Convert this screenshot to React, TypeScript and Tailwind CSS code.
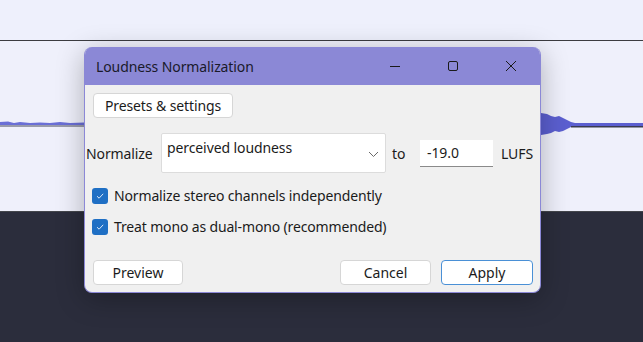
import React from "react";

const font = { fontFamily: '"Noto Sans", "Segoe UI", sans-serif' };

const Checkbox: React.FC<{ label: string }> = ({ label }) => (
  <label className="flex items-center gap-[6px] h-[16px]">
    <span className="w-[16px] h-[16px] rounded-[3px] bg-[#1f6fc4] flex items-center justify-center">
      <svg width="10" height="10" viewBox="0 0 10 10">
        <path d="M2 5.2 L4.1 7.2 L8.2 2.8" fill="none" stroke="#dbe8f7" strokeWidth="1" />
      </svg>
    </span>
    <span className="text-[14px] text-[#1b1b1b] leading-none tracking-[-0.15px]">{label}</span>
  </label>
);

const Btn: React.FC<{ label: string; w: string; primary?: boolean }> = ({ label, w, primary }) => (
  <button
    className={`${w} h-[25px] bg-white rounded-[4px] text-[14px] text-[#1b1b1b] leading-none pt-[1px] ${
      primary ? "border border-[#4a90d6]" : "border border-[#d6d6d6]"
    }`}
  >
    {label}
  </button>
);

export default function App() {
  return (
    <div className="relative w-[643px] h-[342px] overflow-hidden bg-[#eef0fc]" style={font}>
      {/* track area */}
      <div className="flex flex-col h-full">
        <div className="h-[40px] bg-[#eef0fc]" />
        <div className="h-[1px] bg-[#3c3c40]" />
        <div className="relative h-[170px] bg-[#eff0fb]">
          <svg className="absolute left-0 top-[79px]" width="84" height="8" viewBox="0 0 84 8">
            <path
              d="M0 2 L8 1.5 L14 3 L20 2 L30 3 L40 2.5 L50 3 L60 2 L70 3 L84 2.5 L84 5 L0 5 Z"
              fill="#6a6fd6"
            />
            <rect x="0" y="5.5" width="84" height="1" fill="#44465a" />
          </svg>
          <svg className="absolute left-[541px] top-[68px]" width="102" height="30" viewBox="0 0 102 30">
            <path
              d="M0 4 L6 5 L10 7 L14 8 L18 7 L22 9 L26 11 L30 13 L34 14 L102 14 L102 17 L34 17 L30 18 L26 20 L22 22 L18 23 L14 22 L10 24 L6 25 L0 26 Z"
              fill="#5b5fd0"
            />
            <rect x="30" y="17" width="72" height="1.5" fill="#3a3c50" />
          </svg>
        </div>
        <div className="h-[1px] bg-[#44464c]" />
        <div className="flex-1 bg-[#2b2d3c]" />
      </div>

      {/* dialog */}
      <div className="absolute left-[84px] top-[47px] w-[457px] h-[246px] rounded-[8px] overflow-hidden bg-[#f0f0f0] border border-[#8b88d6] border-t-0 shadow-[0_6px_28px_rgba(0,0,0,0.28)] flex flex-col">
        <div className="h-[38px] bg-[#8b88d6] flex items-center pl-[11px] shrink-0">
          <span className="text-[14px] text-[#1a1a2a] flex-1 tracking-[-0.1px]">Loudness Normalization</span>
          <div className="flex items-center">
            <span className="w-[58px] flex justify-center">
              <svg width="12" height="12" viewBox="0 0 12 12">
                <path d="M1 6.5 H11" stroke="#1a1a1a" strokeWidth="1" />
              </svg>
            </span>
            <span className="w-[58px] flex justify-center">
              <svg width="12" height="12" viewBox="0 0 12 12">
                <rect x="1.5" y="1.5" width="9" height="9" rx="1.5" fill="none" stroke="#1a1a1a" strokeWidth="1" />
              </svg>
            </span>
            <span className="w-[58px] flex justify-center">
              <svg width="12" height="12" viewBox="0 0 12 12">
                <path d="M1 1 L11 11 M11 1 L1 11" stroke="#1a1a1a" strokeWidth="1" />
              </svg>
            </span>
          </div>
        </div>

        <div className="flex flex-col pl-[8px] pr-[7px] pt-[8px]">
          <div className="flex">
            <button className="w-[140px] h-[25px] bg-white border border-[#d6d6d6] rounded-[4px] text-[14px] text-[#1b1b1b] leading-none tracking-[-0.1px] pt-[1px]">
              Presets &amp; settings
            </button>
          </div>

          <div className="flex items-center mt-[15px] -ml-[8px] tracking-[-0.1px]">
            <span className="text-[14px] text-[#1b1b1b] w-[76px] pl-[1px]">Normalize</span>
            <div className="w-[225px] h-[40px] bg-white border border-[#dcdcdc] rounded-[2px] flex items-start justify-between pl-[5px] pr-[6px] pt-[3px]">
              <span className="text-[14px] text-[#1b1b1b]">perceived loudness</span>
              <svg className="mt-[14px]" width="11" height="7" viewBox="0 0 11 7">
                <path d="M1 1 L5.5 5.5 L10 1" fill="none" stroke="#6a6a6a" strokeWidth="1" />
              </svg>
            </div>
            <span className="text-[14px] text-[#1b1b1b] ml-[6px] w-[28px]">to</span>
            <div className="w-[73px] h-[27px] bg-white border-b border-[#8a8a8a] flex items-center pl-[7px]">
              <span className="text-[14px] text-[#1b1b1b]">-19.0</span>
            </div>
            <span className="text-[14px] text-[#1b1b1b] ml-[8px]">LUFS</span>
          </div>

          <div className="flex flex-col gap-[15px] mt-[15px] -ml-[1px]">
            <Checkbox label="Normalize stereo channels independently" />
            <Checkbox label="Treat mono as dual-mono (recommended)" />
          </div>

          <div className="flex items-center mt-[25px]">
            <Btn label="Preview" w="w-[90px]" />
            <div className="flex-1" />
            <Btn label="Cancel" w="w-[91px]" />
            <div className="w-[10px]" />
            <Btn label="Apply" w="w-[92px]" primary />
          </div>
        </div>
      </div>
    </div>
  );
}
